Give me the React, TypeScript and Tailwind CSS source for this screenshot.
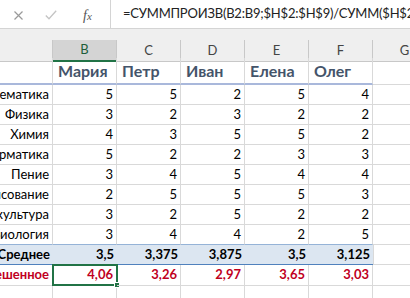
const cols = ['B', 'C', 'D', 'E', 'F'];
const names = ['Мария', 'Петр', 'Иван', 'Елена', 'Олег'];

const data: [string, number[]][] = [
  ['Математика', [5, 5, 2, 5, 4]],
  ['Физика', [3, 2, 3, 2, 2]],
  ['Химия', [4, 3, 5, 5, 2]],
  ['Информатика', [5, 2, 2, 3, 3]],
  ['Пение', [3, 4, 5, 4, 4]],
  ['Рисование', [2, 5, 5, 5, 3]],
  ['Физкультура', [3, 2, 5, 2, 2]],
  ['Биология', [3, 4, 4, 2, 5]],
];

const avg = ['3,5', '3,375', '3,875', '3,5', '3,125'];
const weighted = ['4,06', '3,26', '2,97', '3,65', '3,03'];

const gridCols = 'grid grid-cols-[53px_64px_64px_64px_64px_64px_64px] w-[473px]';
const cell = 'flex items-center justify-end overflow-hidden whitespace-nowrap pr-[3px] border-r border-b border-[#d9d9d9]';

function FormulaBar() {
  return (
    <div className="flex h-[29px] border-b border-[#d4d4d4] bg-white">
      <div className="relative flex w-[110px] items-center">
        <svg className="absolute left-[14px] top-[11px]" width="9" height="9" viewBox="0 0 9 9">
          <path d="M0.5 0.5 L8.5 8.5 M8.5 0.5 L0.5 8.5" stroke="#9a9a9a" strokeWidth="1.2" fill="none" />
        </svg>
        <svg className="absolute left-[45px] top-[10px]" width="12" height="10" viewBox="0 0 12 10">
          <path d="M0.8 5.5 L4 8.8 L11.2 0.8" stroke="#c4c4c4" strokeWidth="1.3" fill="none" />
        </svg>
        <span className="absolute left-[83px] top-[5px] font-['Liberation_Serif',serif] text-[14px] italic text-[#555]">
          f<span className="text-[11px]">x</span>
        </span>
      </div>
      <div className="flex flex-1 items-center overflow-hidden whitespace-nowrap border-l border-[#d4d4d4] pl-[12px] text-[13px] tracking-[-0.2px] text-[#222]">
        =СУММПРОИЗВ(B2:B9;$H$2:$H$9)/СУММ($H$2:$H$9)
      </div>
    </div>
  );
}

function ColumnHeaders() {
  return (
    <div className={`${gridCols} h-[18px] text-[13px]`}>
      <div className="border-r border-b border-[#c8c8c8] bg-[#efefef]" />
      {[...cols, 'G'].map((c) =>
        c === 'B' ? (
          <div key={c} className="flex items-center justify-center border-r border-b-2 border-r-[#c8c8c8] border-b-[#217346] bg-[#d4d4d4] text-[#1e5e3a]">
            {c}
          </div>
        ) : (
          <div key={c} className="flex items-center justify-center border-r border-b border-[#c8c8c8] bg-[#efefef] text-[#444]">
            {c}
          </div>
        )
      )}
    </div>
  );
}

export default function App() {
  return (
    <div className="h-[298px] w-[410px] overflow-hidden bg-white font-['Lato','Open_Sans',sans-serif] text-[13px] text-black">
      <FormulaBar />
      <div className="h-[11px] bg-[#efefef]" />
      <ColumnHeaders />

      {/* names */}
      <div className={`${gridCols} h-[27px]`}>
        {['', ...names].map((n, i) => (
          <div
            key={i}
            className="flex items-center overflow-hidden whitespace-nowrap border-r border-b-2 border-r-[#d9d9d9] border-b-[#a9b8db] pl-[5px] text-[16px] font-bold text-[#44546a]"
          >
            {n}
          </div>
        ))}
        <div className="border-r border-b border-[#d9d9d9]" />
      </div>

      {data.map(([label, vals], r) => (
        <div key={label} className={`${gridCols} h-[20px]`}>
          <div className={`${cell} ${r === data.length - 1 ? 'border-b-[#95b3d7]' : ''}`}>{label}</div>
          {vals.map((v, i) => (
            <div key={i} className={`${cell} ${r === data.length - 1 ? 'border-b-[#95b3d7]' : ''}`}>
              {v}
            </div>
          ))}
          <div className={cell} />
        </div>
      ))}

      {/* average */}
      <div className={`${gridCols} h-[20px] font-bold`}>
        {['Среднее', ...avg].map((v, i) => (
          <div
            key={i}
            className="flex items-center justify-end overflow-hidden whitespace-nowrap border-b border-[#4f81bd] bg-[#dce6f1] pr-[3px]"
          >
            {v}
          </div>
        ))}
        <div className={`${cell} border-l border-l-[#d9d9d9]`} />
      </div>

      {/* weighted */}
      <div className={`${gridCols} h-[20px] font-bold text-[#c0001e]`}>
        <div className={cell}>Взвешенное</div>
        {weighted.map((v, i) => (
          <div key={i} className={`${cell} relative overflow-visible`}>
            {v}
            {i === 0 && (
              <div className="absolute -left-px -top-px h-[22px] w-[66px] border-2 border-[#217346]">
                <div className="absolute -bottom-[4px] -right-[4px] h-[6px] w-[6px] border border-white bg-[#217346]" />
              </div>
            )}
          </div>
        ))}
        <div className={cell} />
      </div>

      <div className={`${gridCols} h-[20px]`}>
        {Array.from({ length: 7 }).map((_, i) => (
          <div key={i} className={cell} />
        ))}
      </div>
    </div>
  );
}
